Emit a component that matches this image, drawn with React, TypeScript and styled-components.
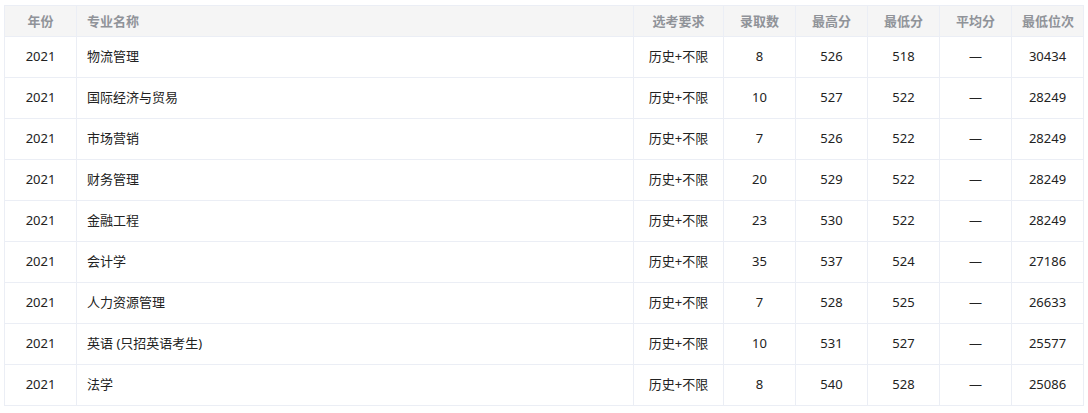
import React from 'react'
import styled, { createGlobalStyle } from 'styled-components'

const GlobalStyle = createGlobalStyle`
  body {
    margin: 0;
    background: #fff;
    font-family: "Noto Sans", "Noto Sans CJK SC", sans-serif;
  }
`

interface Row {
  year: string
  name: string
  subject: string
  count: string
  max: string
  min: string
  avg: string
  rank: string
}

const rows: Row[] = [
  { year: '2021', name: '物流管理', subject: '历史+不限', count: '8', max: '526', min: '518', avg: '—', rank: '30434' },
  { year: '2021', name: '国际经济与贸易', subject: '历史+不限', count: '10', max: '527', min: '522', avg: '—', rank: '28249' },
  { year: '2021', name: '市场营销', subject: '历史+不限', count: '7', max: '526', min: '522', avg: '—', rank: '28249' },
  { year: '2021', name: '财务管理', subject: '历史+不限', count: '20', max: '529', min: '522', avg: '—', rank: '28249' },
  { year: '2021', name: '金融工程', subject: '历史+不限', count: '23', max: '530', min: '522', avg: '—', rank: '28249' },
  { year: '2021', name: '会计学', subject: '历史+不限', count: '35', max: '537', min: '524', avg: '—', rank: '27186' },
  { year: '2021', name: '人力资源管理', subject: '历史+不限', count: '7', max: '528', min: '525', avg: '—', rank: '26633' },
  { year: '2021', name: '英语 (只招英语考生)', subject: '历史+不限', count: '10', max: '531', min: '527', avg: '—', rank: '25577' },
  { year: '2021', name: '法学', subject: '历史+不限', count: '8', max: '540', min: '528', avg: '—', rank: '25086' },
]

const widths = [72, 557, 90, 72, 72, 72, 72, 72]

export default function App() {
  return (
    <>
      <GlobalStyle />
      <Wrapper>
        <Table>
          <colgroup>
            {widths.map((w, i) => <col key={i} style={{ width: w }} />)}
          </colgroup>
          <thead>
            <tr>
              <Th>年份</Th>
              <Th $left>专业名称</Th>
              <Th>选考要求</Th>
              <Th>录取数</Th>
              <Th>最高分</Th>
              <Th>最低分</Th>
              <Th>平均分</Th>
              <Th>最低位次</Th>
            </tr>
          </thead>
          <tbody>
            {rows.map((r, i) => (
              <tr key={i}>
                <Td>{r.year}</Td>
                <Td $left>{r.name}</Td>
                <Td>{r.subject}</Td>
                <Td>{r.count}</Td>
                <Td>{r.max}</Td>
                <Td>{r.min}</Td>
                <Td>{r.avg}</Td>
                <Td>{r.rank}</Td>
              </tr>
            ))}
          </tbody>
        </Table>
      </Wrapper>
    </>
  )
}

const Wrapper = styled.div`
  padding: 5px 4px;
`
const Table = styled.table`
  width: 1080px;
  table-layout: fixed;
  border-collapse: collapse;
  border: 1px solid #ebeef5;
  font-size: 13px;
`
const Th = styled.th<{ $left?: boolean }>`
  height: 29px;
  padding: 0 10px 1px;
  background: #f5f5f5;
  border: 1px solid #ebeef5;
  color: #909399;
  font-weight: 700;
  text-align: ${p => (p.$left ? 'left' : 'center')};
  white-space: nowrap;
`
const Td = styled.td<{ $left?: boolean }>`
  height: 37px;
  padding: 0 10px 3px;
  border: 1px solid #ebeef5;
  color: #222;
  text-align: ${p => (p.$left ? 'left' : 'center')};
  white-space: nowrap;
`
